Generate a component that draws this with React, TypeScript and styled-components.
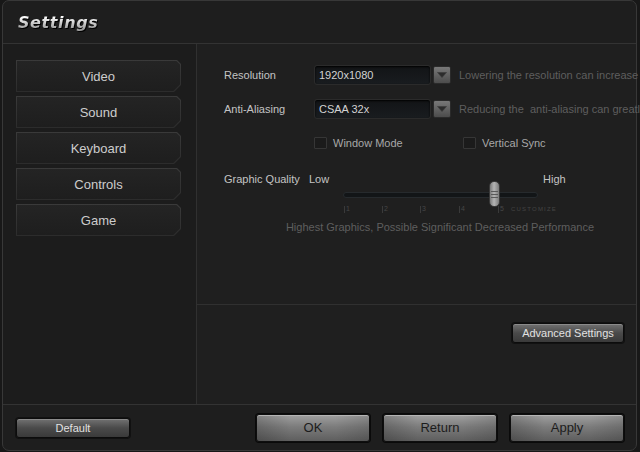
import React from 'react';
import styled, { createGlobalStyle } from 'styled-components';

const Global = createGlobalStyle`
  html, body { margin: 0; padding: 0; background: #161616; }
  body { font-family: "Liberation Sans", Arial, sans-serif; }
  * { box-sizing: border-box; }
`;

const Screen = styled.div`
  width: 640px;
  height: 452px;
  overflow: hidden;
  background: #181818;
`;

const Window = styled.div`
  margin-left: 2px;
  width: 635px;
  height: 451px;
  border: 1px solid #383838;
  border-radius: 7px;
  background: #1e1e1e;
  display: flex;
  flex-direction: column;
`;

const Header = styled.div`
  height: 43px;
  flex: none;
  border-bottom: 1px solid #333;
  display: flex;
  align-items: center;
  padding-left: 15px;
`;

const Title = styled.h1`
  margin: 0;
  font-family: "DejaVu Sans", Verdana, sans-serif;
  font-weight: bold;
  font-style: oblique;
  font-size: 16px;
  letter-spacing: 0.6px;
  background: linear-gradient(#ffffff 20%, #9c9c9c 85%);
  -webkit-background-clip: text;
  background-clip: text;
  color: transparent;
  filter: drop-shadow(1px 1px 0 #000);
`;

const Middle = styled.div`
  height: 361px;
  flex: none;
  display: flex;
  border-bottom: 1px solid #333;
`;

const Sidebar = styled.nav`
  width: 194px;
  flex: none;
  border-right: 1px solid #303030;
  background: #1c1c1c;
  padding: 16px 0 0 13px;
  display: flex;
  flex-direction: column;
  gap: 4px;
`;

const MenuItem = styled.button`
  all: unset;
  box-sizing: border-box;
  width: 165px;
  height: 32px;
  padding: 1px;
  display: flex;
  background: linear-gradient(#3a3a3a, #2c2c2c);
  clip-path: polygon(0 0, calc(100% - 4px) 0, 100% 4px, 100% calc(100% - 7px), calc(100% - 7px) 100%, 0 100%);
  cursor: pointer;
`;

const MenuFace = styled.span`
  flex: 1;
  display: flex;
  align-items: center;
  justify-content: center;
  background: linear-gradient(#242424, #1e1e1e);
  clip-path: polygon(0 0, calc(100% - 3.6px) 0, 100% 3.6px, 100% calc(100% - 6.6px), calc(100% - 6.6px) 100%, 0 100%);
  color: #cdcdcd;
  font-size: 13px;
`;

const Content = styled.div`
  flex: 1;
  display: flex;
  flex-direction: column;
  min-width: 0;
`;

const Upper = styled.section`
  height: 261px;
  flex: none;
  border-bottom: 1px solid #303030;
  padding: 21px 0 0 27px;
  display: flex;
  flex-direction: column;
  background: #1f1f1f;
`;

const Lower = styled.section`
  flex: 1;
  display: flex;
  justify-content: flex-end;
  align-items: flex-start;
  padding: 18px 12px 0 0;
  background: #1f1f1f;
`;

const SelectRow = styled.div<{ $top?: number }>`
  display: flex;
  align-items: center;
  height: 20px;
  margin-top: ${(p) => p.$top ?? 0}px;
  white-space: nowrap;
`;

const Label = styled.span<{ $w: number }>`
  width: ${(p) => p.$w}px;
  flex: none;
  font-size: 11px;
  color: #c4c4c4;
`;

const SelectBox = styled.div`
  width: 117px;
  height: 20px;
  flex: none;
  border: 1px solid #2b2b2b;
  border-radius: 3px;
  background: linear-gradient(#121416, #191c1f);
  box-shadow: inset 0 1px 2px #000;
  color: #d2d2d2;
  font-size: 11px;
  display: flex;
  align-items: center;
  padding-left: 4px;
`;

const DropButton = styled.div`
  width: 18px;
  height: 18px;
  flex: none;
  margin-left: 2px;
  border-radius: 2px;
  border: 1px solid #2a2a2a;
  background: linear-gradient(#787878, #4c4c4c);
  display: flex;
  align-items: center;
  justify-content: center;
`;

const Hint = styled.span`
  margin-left: 8px;
  font-size: 11px;
  color: #5e5e5e;
  white-space: nowrap;
`;

const CheckRow = styled.div`
  display: flex;
  align-items: center;
  height: 12px;
  margin-top: 18px;
  padding-left: 90px;
`;

const CheckItem = styled.label<{ $w?: number }>`
  display: flex;
  align-items: center;
  gap: 6px;
  width: ${(p) => (p.$w ? `${p.$w}px` : 'auto')};
  font-size: 11px;
  color: #a8a8a8;
`;

const Box = styled.span`
  width: 13px;
  height: 12px;
  border: 1px solid #363636;
  background: #1b1b1b;
  border-radius: 1px;
`;

const QualityRow = styled.div`
  display: flex;
  align-items: flex-start;
  margin-top: 23px;
  height: 42px;
`;

const QText = styled.span<{ $w?: number; $ml?: number }>`
  width: ${(p) => (p.$w ? `${p.$w}px` : 'auto')};
  margin-left: ${(p) => p.$ml ?? 0}px;
  flex: none;
  line-height: 14px;
  font-size: 11px;
  color: #c4c4c4;
`;

const Slider = styled.div`
  position: relative;
  width: 195px;
  flex: none;
  padding-top: 20px;
`;

const Track = styled.div`
  height: 6px;
  border-radius: 3px;
  background: #121517;
  border: 1px solid #262a2d;
`;

const Thumb = styled.div<{ $left: number }>`
  position: absolute;
  top: 9px;
  left: ${(p) => p.$left}px;
  width: 11px;
  height: 26px;
  border-radius: 5px;
  border: 1px solid #3a3a3a;
  background: linear-gradient(90deg, #7a7a7a, #b4b4b4 45%, #7c7c7c);
  display: flex;
  flex-direction: column;
  justify-content: center;
  align-items: center;
  gap: 2px;
`;

const Grip = styled.span`
  width: 7px;
  height: 1px;
  background: #5a5a5a;
`;

const Ticks = styled.div`
  display: flex;
  margin-top: 7px;
  padding-left: 1px;
  font-size: 7px;
  line-height: 8px;
  color: #464646;
`;

const Tick = styled.span<{ $w: number }>`
  width: ${(p) => p.$w}px;
  flex: none;
  display: flex;
  gap: 1px;
  align-items: flex-end;
`;

const TickMark = styled.i`
  width: 1px;
  height: 7px;
  background: #3a3a3a;
`;

const Customize = styled.span`
  font-size: 6px;
  letter-spacing: 1.2px;
  color: #444;
`;

const Description = styled.p`
  margin: 6px 0 0;
  width: 432px;
  text-align: center;
  font-size: 11px;
  line-height: 14px;
  color: #5e5e5e;
  white-space: nowrap;
`;

const SmallButton = styled.button<{ $w: number }>`
  all: unset;
  box-sizing: border-box;
  width: ${(p) => p.$w}px;
  height: 20px;
  border: 1px solid #0c0c0c;
  border-radius: 3px;
  background: linear-gradient(#727272, #4a4a4a 50%, #3a3a3a);
  box-shadow: inset 0 1px 0 #8a8a8a, 0 0 0 1px #111;
  color: #e2e2e2;
  font-size: 11px;
  display: flex;
  align-items: center;
  justify-content: center;
  cursor: pointer;
`;

const Footer = styled.footer`
  flex: 1;
  display: flex;
  align-items: center;
  padding: 0 12px 0 13px;
  gap: 13px;
`;

const Spacer = styled.div`
  flex: 1;
`;

const BigButton = styled.button`
  all: unset;
  box-sizing: border-box;
  width: 114px;
  height: 28px;
  border: 1px solid #0e0e0e;
  border-radius: 3px;
  background: linear-gradient(90deg, rgba(0,0,0,0.18), rgba(0,0,0,0) 30%, rgba(0,0,0,0) 70%, rgba(0,0,0,0.12)),
    linear-gradient(#a0a0a0, #7c7c7c 45%, #5e5e5e);
  box-shadow: inset 0 1px 0 #b4b4b4, 0 0 0 1px #0a0a0a;
  color: #1c1c1c;
  font-size: 13px;
  display: flex;
  align-items: center;
  justify-content: center;
  cursor: pointer;
`;

const Chevron = () => (
  <svg width="10" height="6" viewBox="0 0 10 6">
    <path d="M0.5 0.5 L9.5 0.5 L5 5.5 Z" fill="#2c2c2c" stroke="#3a3a3a" strokeWidth="0.6" />
  </svg>
);

const menu = ['Video', 'Sound', 'Keyboard', 'Controls', 'Game'];
const ticks = [
  { n: '1', w: 38 },
  { n: '2', w: 38 },
  { n: '3', w: 39 },
  { n: '4', w: 39 },
  { n: '5', w: 13 },
];

export default function App() {
  return (
    <Screen>
      <Global />
      <Window>
        <Header>
          <Title>Settings</Title>
        </Header>
        <Middle>
          <Sidebar>
            {menu.map((m) => (
              <MenuItem key={m}>
                <MenuFace>{m}</MenuFace>
              </MenuItem>
            ))}
          </Sidebar>
          <Content>
            <Upper>
              <SelectRow>
                <Label $w={90}>Resolution</Label>
                <SelectBox>1920x1080</SelectBox>
                <DropButton>
                  <Chevron />
                </DropButton>
                <Hint>Lowering the resolution can increase performance</Hint>
              </SelectRow>
              <SelectRow $top={14}>
                <Label $w={90}>Anti-Aliasing</Label>
                <SelectBox>CSAA 32x</SelectBox>
                <DropButton>
                  <Chevron />
                </DropButton>
                <Hint>Reducing the&nbsp; anti-aliasing can greatly improve performance</Hint>
              </SelectRow>
              <CheckRow>
                <CheckItem $w={149}>
                  <Box />
                  Window Mode
                </CheckItem>
                <CheckItem>
                  <Box />
                  Vertical Sync
                </CheckItem>
              </CheckRow>
              <QualityRow>
                <QText $w={85}>Graphic Quality</QText>
                <QText $w={34}>Low</QText>
                <Slider>
                  <Track />
                  <Thumb $left={146}>
                    <Grip />
                    <Grip />
                    <Grip />
                  </Thumb>
                  <Ticks>
                    {ticks.map((t) => (
                      <Tick key={t.n} $w={t.w}>
                        <TickMark />
                        {t.n}
                      </Tick>
                    ))}
                    <Customize>CUSTOMIZE</Customize>
                  </Ticks>
                </Slider>
                <QText $ml={5}>High</QText>
              </QualityRow>
              <Description>Highest Graphics, Possible Significant Decreased Performance</Description>
            </Upper>
            <Lower>
              <SmallButton $w={112}>Advanced Settings</SmallButton>
            </Lower>
          </Content>
        </Middle>
        <Footer>
          <SmallButton $w={114}>Default</SmallButton>
          <Spacer />
          <BigButton>OK</BigButton>
          <BigButton>Return</BigButton>
          <BigButton>Apply</BigButton>
        </Footer>
      </Window>
    </Screen>
  );
}
